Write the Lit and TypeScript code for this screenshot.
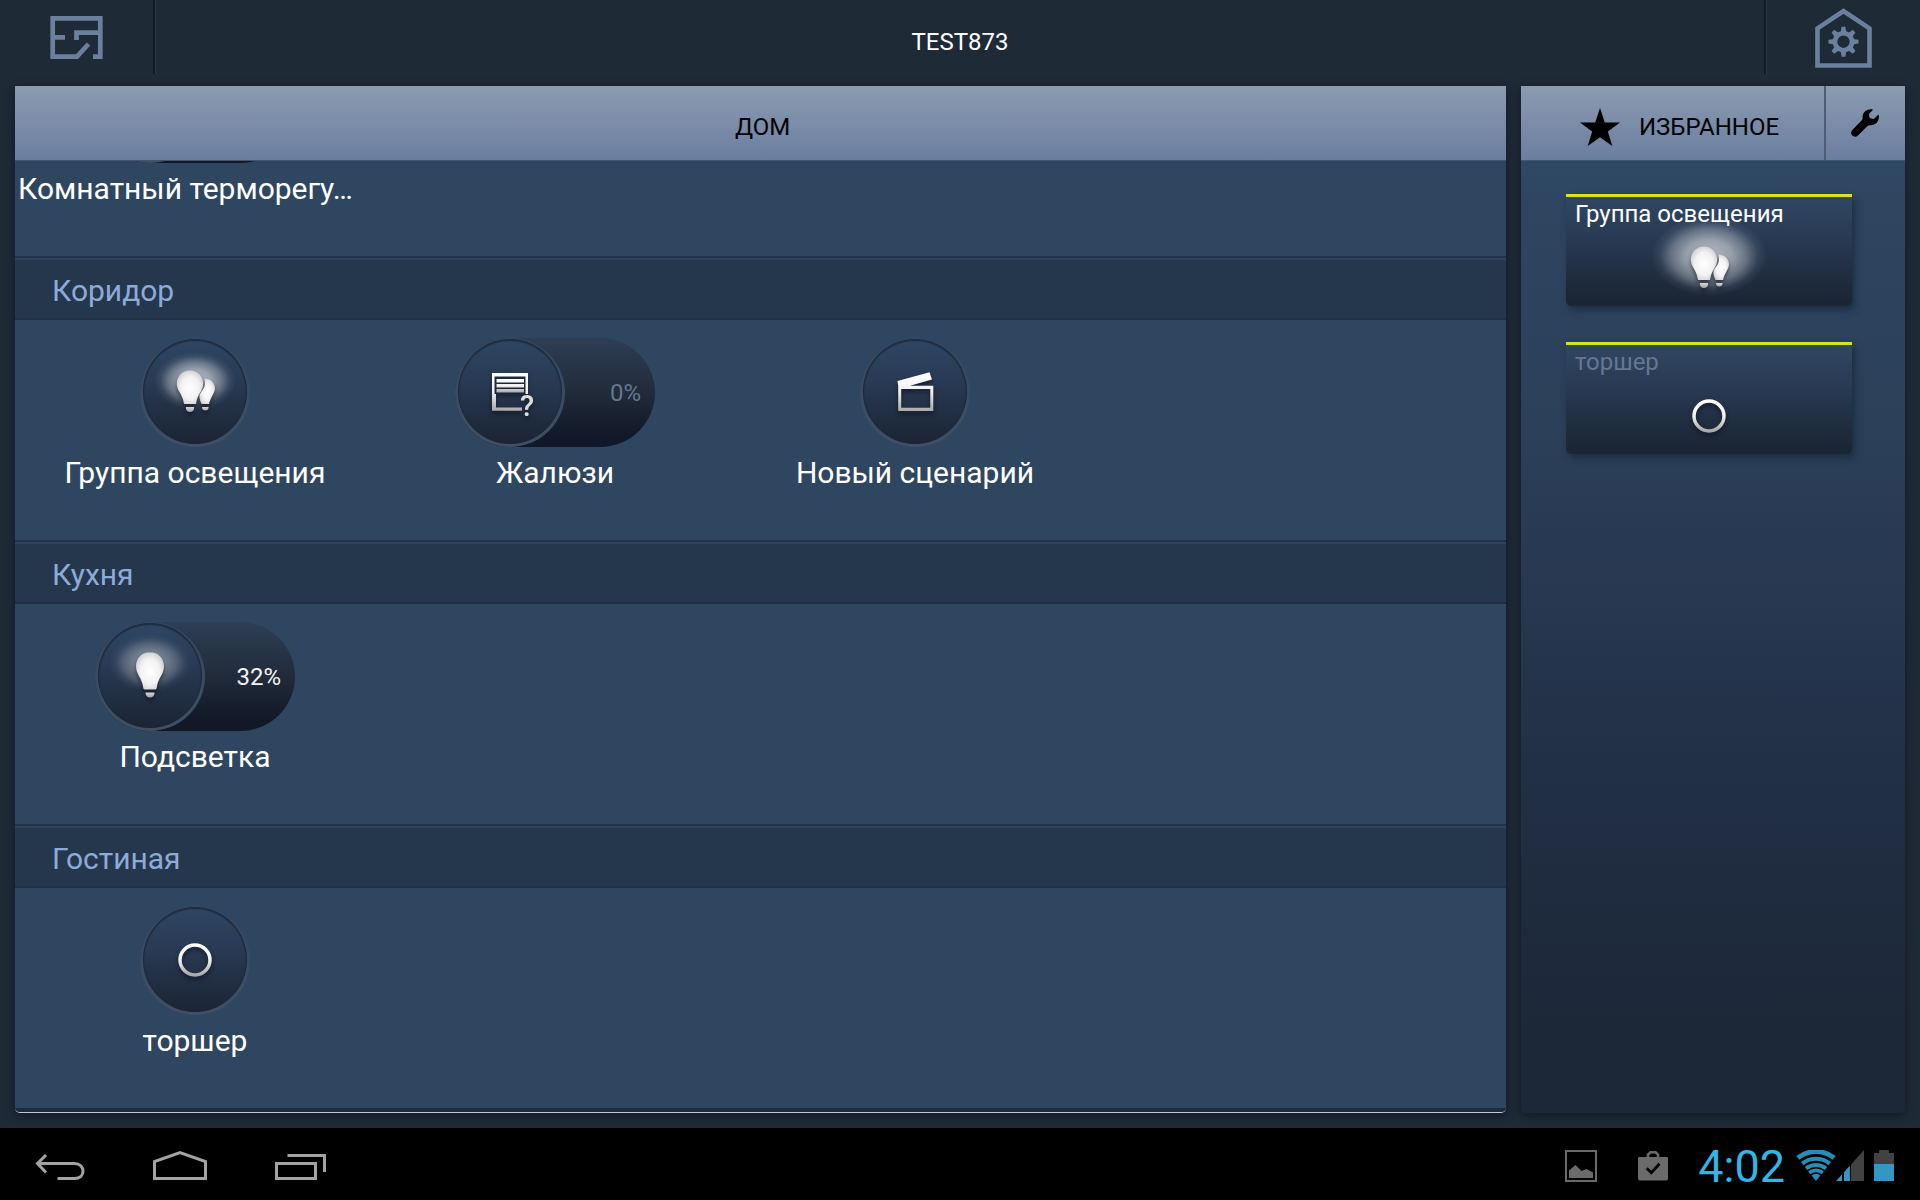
import { LitElement, html, css, svg, nothing } from "lit";
import { customElement, property, state } from "lit/decorators.js";

type IconName = "bulbs" | "bulb" | "blinds" | "scene" | "ring" | "none";

interface Device {
  name: string;
  icon: IconName;
  value?: string;
  active?: boolean;
  long?: boolean;
}

interface Room {
  name: string;
  devices: Device[];
}

const ROOMS: Room[] = [
  {
    name: "",
    devices: [{ name: "Комнатный терморегу…", icon: "none", value: "", long: true }],
  },
  {
    name: "Коридор",
    devices: [
      { name: "Группа освещения", icon: "bulbs" },
      { name: "Жалюзи", icon: "blinds", value: "0%" },
      { name: "Новый сценарий", icon: "scene" },
    ],
  },
  { name: "Кухня", devices: [{ name: "Подсветка", icon: "bulb", value: "32%", active: true }] },
  { name: "Гостиная", devices: [{ name: "торшер", icon: "ring" }] },
];

const FAVORITES: Device[] = [
  { name: "Группа освещения", icon: "bulbs", active: true },
  { name: "торшер", icon: "ring" },
];

@customElement("device-icon")
class DeviceIcon extends LitElement {
  @property() name: IconName = "ring";
  @property({ type: Boolean, reflect: true }) wide = false;

  static styles = css`
    :host {
      display: block;
      width: 110px;
      height: 109px;
    }
    :host([wide]) {
      height: 92px;
    }
    .icon {
      display: block;
      width: 100%;
      height: 100%;
      overflow: visible;
    }
    .shape {
      filter: drop-shadow(0 3px 2px rgba(8, 14, 24, 0.6));
    }
    .mark {
      font: 500 29px Roboto, "Liberation Sans", sans-serif;
    }
  `;

  private shape() {
    switch (this.name) {
      case "bulbs":
        return svg`
          <path fill="url(#lamp)" d="M50 32.5c-7.600 0-13.200 5.800-13.200 13 0 7.600 5.600 9.800 7.200 20.500h12c1.600-10.700 7.200-12.900 7.200-20.500 0-7.200-5.600-13-13.200-13z"/>
          <path fill="url(#base)" d="M45.800 69h8.400c0 3.200-1.600 5-4.200 5s-4.200-1.800-4.200-5z"/>
          <path fill="url(#lamp)" d="M64.300 40.500c6 0 10.700 4.200 10.700 9.800 0 5-4.600 8.700-5.900 15.700h-7.600c-.9-2.600-2.100-4.600-2.100-7.600 0-4.200 5.400-6.600 5.600-12.600 0-2-.3-3.600-.7-5.300z"/>
          <path fill="url(#base)" d="M62 69h6.600c0 2.400-1.300 3.600-3.300 3.600s-3.300-1.200-3.300-3.600z"/>`;
      case "bulb":
        return svg`
          <path fill="url(#lamp)" d="M55 30.300c-8.200 0-14 6.200-14 13.900 0 8.300 6.200 11.800 7.200 21.300.1 1.400.8 2 2.100 2h9.400c1.300 0 2-.6 2.100-2 1-9.500 7.200-13 7.200-21.300 0-7.700-5.800-13.900-14-13.900z"/>
          <path fill="url(#base)" d="M50.500 70.500h9c0 3.200-1.700 5-4.500 5s-4.500-1.800-4.500-5z"/>`;
      case "blinds":
        return svg`
          <path fill="url(#metal)" d="M37 35h36v21h-2.500V38.500h-31V56H41v13.500h26v3.200H37z"/>
          <path fill="url(#metal)" d="M41.500 41h27.500v3.500h-27.500zM41.500 46h27.500v3.500h-27.500zM41.500 51h27.500v3.500h-27.500z"/>
          <text class="mark" fill="#deded9" x="65" y="78">?</text>`;
      case "scene":
        return svg`
          <path fill="url(#metal)" d="M37.500 43 69.500 34.200 72 41.500 50 47.700H73.300V73H38.200V48zM41.200 51v18.800h29.100V51z" fill-rule="evenodd"/>`;
      case "ring":
        return svg`<circle cx="55" cy="54" r="15" fill="none" stroke="url(#metal)" stroke-width="3.500"/>`;
      default:
        return nothing;
    }
  }

  private glow() {
    if (this.name === "bulbs") {
      return this.wide
        ? svg`<ellipse cx="55" cy="42" rx="58" ry="40" fill="url(#glow)"/>`
        : svg`<ellipse cx="55" cy="43" rx="41" ry="29" fill="url(#glow)"/>`;
    }
    if (this.name === "bulb") {
      return svg`<ellipse cx="55" cy="41" rx="41" ry="29" fill="url(#glow)" opacity=".65"/>`;
    }
    return nothing;
  }

  render() {
    return html`
      <svg class="icon" viewBox=${this.wide ? "0 0 110 92" : "0 0 110 109"} aria-hidden="true">
        <defs>
          <radialGradient id="glow">
            <stop offset="0" stop-color="#fff" stop-opacity=".68" />
            <stop offset=".4" stop-color="#eef0f2" stop-opacity=".56" />
            <stop offset=".65" stop-color="#dfe3e8" stop-opacity=".35" />
            <stop offset=".85" stop-color="#d0d6de" stop-opacity=".09" />
            <stop offset="1" stop-color="#d0d6de" stop-opacity="0" />
          </radialGradient>
          <radialGradient id="lamp" cx=".5" cy=".52" r=".62">
            <stop offset="0" stop-color="#fff" />
            <stop offset=".55" stop-color="#f2f2f2" />
            <stop offset="1" stop-color="#c4c4c4" />
          </radialGradient>
          <linearGradient id="base" x2="0" y2="1">
            <stop offset="0" stop-color="#d8d8d8" />
            <stop offset="1" stop-color="#a2a2a2" />
          </linearGradient>
          <linearGradient id="metal" x2="0" y2="1">
            <stop offset="0" stop-color="#fff" />
            <stop offset=".5" stop-color="#f0f0ee" />
            <stop offset="1" stop-color="#a9a9a9" />
          </linearGradient>
        </defs>
        ${this.glow()}
        <g class="shape">${this.shape()}</g>
      </svg>
    `;
  }
}

@customElement("device-tile")
class DeviceTile extends LitElement {
  @property({ attribute: false }) device!: Device;

  static styles = css`
    :host {
      display: block;
    }
    .tile {
      display: flex;
      flex-direction: column;
      align-items: center;
      gap: 8px;
      width: 100%;
      padding: 0 3px;
      border: 0;
      background: none;
      font: 30px/36px Roboto, "Liberation Sans", sans-serif;
      color: #fff;
      cursor: pointer;
    }
    .pill {
      display: flex;
      align-items: center;
      justify-content: space-between;
      box-sizing: border-box;
      width: 200px;
      padding-right: 14px;
      border-radius: 55px;
      background: linear-gradient(#2e3e55, #212b3a 50%, #111827 90%);
    }
    .knob {
      display: grid;
      width: 110px;
      height: 109px;
      border-radius: 50%;
      background: linear-gradient(#32465f, #384b62 50%, #3f5065);
    }
    .face {
      grid-area: 1 / 1;
      margin: 1px 3px 3px;
      border-radius: 50%;
      background: linear-gradient(#2d4762, #293a54 40%, #1c2636 94%);
      box-shadow: inset 0 1px 1px 1px rgba(24, 34, 48, 0.7);
    }
    .icon {
      grid-area: 1 / 1;
    }
    .value {
      font-size: 24px;
      color: #647892;
    }
    .value.active {
      color: #f2f4f6;
    }
    .label {
      white-space: nowrap;
    }
    .label.long {
      align-self: flex-start;
    }
  `;

  render() {
    const d = this.device;
    const knob = html`<span class="knob"
      ><span class="face"></span><device-icon class="icon" name=${d.icon}></device-icon
    ></span>`;
    return html`
      <button class="tile" type="button">
        ${d.value === undefined
          ? knob
          : html`<span class="pill"
              >${knob}<span class="value ${d.active ? "active" : ""}">${d.value}</span></span
            >`}
        <span class="label ${d.long ? "long" : ""}">${d.name}</span>
      </button>
    `;
  }
}

@customElement("favorite-card")
class FavoriteCard extends LitElement {
  @property({ attribute: false }) device!: Device;

  static styles = css`
    :host {
      display: block;
    }
    .card {
      display: grid;
      box-sizing: border-box;
      width: 100%;
      height: 112px;
      padding: 0;
      border: 0;
      border-top: 3px solid #d9e416;
      border-radius: 0 0 5px 5px;
      background: linear-gradient(#304761, #293b55 35%, #1b2534 95%);
      box-shadow: 3px 4px 7px rgba(20, 38, 54, 0.7);
      font: 24px/28px Roboto, "Liberation Sans", sans-serif;
      color: #657891;
      text-align: left;
      cursor: pointer;
    }
    .card.active {
      color: #fff;
    }
    .label {
      grid-area: 1 / 1;
      z-index: 1;
      padding: 3px 9px;
    }
    .icon {
      grid-area: 1 / 1;
      place-self: end center;
    }
  `;

  render() {
    const d = this.device;
    return html`
      <button class="card ${d.active ? "active" : ""}" type="button">
        <span class="label">${d.name}</span>
        <device-icon class="icon" name=${d.icon} wide></device-icon>
      </button>
    `;
  }
}

@customElement("app-root")
class AppRoot extends LitElement {
  @state() private rooms = ROOMS;
  @state() private favorites = FAVORITES;

  static styles = css`
    :host {
      display: flex;
      flex-direction: column;
      height: 100vh;
      overflow: hidden;
      background: #1f2a37;
      font: 24px/28px Roboto, "Liberation Sans", sans-serif;
      color: #fff;
    }
    button {
      margin: 0;
      padding: 0;
      border: 0;
      background: none;
      font: inherit;
      color: inherit;
      cursor: pointer;
    }
    svg {
      display: block;
    }
    .top {
      display: grid;
      grid-template-columns: 156px 1fr 156px;
      align-items: start;
      height: 86px;
    }
    .corner {
      display: grid;
      place-items: center;
      box-sizing: border-box;
      height: 74px;
      padding-top: 2px;
    }
    .corner.start {
      padding-right: 3px;
      border-right: 1px solid #2b3949;
      box-shadow: inset -2px 0 #111922;
    }
    .corner.end {
      border-left: 2px solid #111922;
      box-shadow: inset 1px 0 #2b3949;
    }
    .title {
      margin: 0;
      font-size: 24px;
      font-weight: 400;
      line-height: 84px;
      text-align: center;
    }
    .main {
      display: grid;
      grid-template-columns: minmax(0, 1fr) 384px;
      gap: 15px;
      flex: 1;
      min-height: 0;
      padding: 0 15px 15px;
    }
    .panel {
      display: flex;
      flex-direction: column;
      box-sizing: border-box;
      min-height: 0;
      overflow: hidden;
      border-radius: 0 0 5px 5px;
    }
    .frame {
      display: grid;
      min-height: 0;
      border-radius: 0 0 5px 5px;
      box-shadow: 0 2px 8px rgba(8, 14, 22, 0.6);
    }
    .bar {
      display: flex;
      flex: none;
      height: 74px;
      border-bottom: 1px solid #41556f;
      background: linear-gradient(#8c9bb1, #6a7e9f);
      color: #020305;
    }
    .heading {
      display: flex;
      align-items: center;
      justify-content: center;
      gap: 19px;
      flex: 1;
      margin: 0;
      padding: 8px 0 0 4px;
      font-size: 24px;
      font-weight: 400;
    }
    .favorites .heading {
      padding-left: 14px;
    }
    .edit {
      display: grid;
      place-items: center;
      box-sizing: border-box;
      width: 81px;
      padding-right: 2px;
      border-left: 2px solid #4d5d75;
    }
    .home {
      background: #2f4660;
      border-bottom: 1px solid #c3c9d0;
    }
    .rooms {
      display: flex;
      flex-direction: column;
      justify-content: flex-end;
      flex: 1;
      min-height: 0;
      overflow: hidden;
      border-bottom: 4px solid #1e2b3d;
    }
    .room {
      flex: none;
    }
    .name {
      box-sizing: border-box;
      height: 64px;
      margin: 0;
      padding: 6px 37px 0;
      border-top: 2px solid #22324a;
      border-bottom: 2px solid #1f2e42;
      background: #25374d;
      box-shadow: inset 0 2px #2f435d;
      font-size: 30px;
      font-weight: 400;
      line-height: 54px;
      color: #8dabd8;
    }
    .devices {
      display: grid;
      grid-template-columns: repeat(auto-fill, 360px);
      align-items: start;
      box-sizing: border-box;
      height: 220px;
      padding-top: 18px;
    }
    .favorites {
      background: linear-gradient(#2f4963 74px, #2f4560 12%, #2b3f58 35%, #223047 65%, #1c2737 92%);
    }
    .cards {
      display: flex;
      flex-direction: column;
      gap: 36px;
      padding: 33px 53px 0 45px;
    }
    .system {
      display: flex;
      align-items: center;
      flex: none;
      height: 72px;
      padding: 0 26px 0 35px;
      background: #000;
    }
    .nav {
      display: flex;
      align-items: center;
      gap: 68px;
      flex: 1;
      padding-top: 1px;
    }
    .status {
      display: flex;
      align-items: center;
      padding-top: 4px;
    }
    .note {
      margin-right: 41px;
    }
    .note.last {
      margin-right: 30px;
    }
    .clock {
      margin-right: 11px;
      padding-top: 2px;
      font-size: 45px;
      line-height: 54px;
      color: #33b5e5;
    }
    .signal {
      margin-right: 10px;
    }
  `;

  private gear() {
    return [0, 45, 90, 135, 180, 225, 270, 315].map(
      (a) => svg`<path d="M25.700 24.500 26.600 18.700h3.800l.9 5.800z" transform="rotate(${a} 28.500 33.700)"/>`,
    );
  }

  render() {
    return html`
      <header class="top">
        <button class="corner start" type="button" aria-label="План">
          <svg width="53" height="44" viewBox="0 0 53 44" fill="none" stroke="#6b809d" stroke-width="4.700">
            <path d="M43 40.700h7.300V2.400H2.700v38.300h24.300L38.500 28" />
            <path d="M2.700 21.400H15M50 16.700H26.500V24" />
          </svg>
        </button>
        <h1 class="title">TEST873</h1>
        <button class="corner end" type="button" aria-label="Настройки">
          <svg width="57" height="60" viewBox="0 0 57 60" fill="#6b809d">
            <path d="M2.500 57.500V20.400L28.500 3l26 17.400v37.100z" fill="none" stroke="#6b809d" stroke-width="4.600" />
            <circle cx="28.500" cy="33.700" r="8.500" fill="none" stroke="#6b809d" stroke-width="4.600" />
            ${this.gear()}
          </svg>
        </button>
      </header>

      <main class="main">
        <div class="frame">
          <section class="panel home">
            <div class="bar"><h2 class="heading">ДОМ</h2></div>
            <div class="rooms">
              ${this.rooms.map(
                (room) => html`
                  <section class="room">
                    ${room.name ? html`<h3 class="name">${room.name}</h3>` : nothing}
                    <div class="devices">
                      ${room.devices.map((d) => html`<device-tile .device=${d}></device-tile>`)}
                    </div>
                  </section>
                `,
              )}
            </div>
          </section>
        </div>

        <div class="frame">
          <aside class="panel favorites">
            <div class="bar">
              <h2 class="heading">
                <svg width="40" height="38" viewBox="0 0 40 38" aria-hidden="true">
                  <path d="M20 0l4.800 14.400L40 14.500 27.800 23.600l4.500 14.400L20 29.300 7.700 38l4.500-14.400L0 14.500l15.200-.1z" />
                </svg>
                ИЗБРАННОЕ
              </h2>
              <button class="edit" type="button" aria-label="Изменить">
                <svg width="28" height="28" viewBox="0 0 28 28">
                  <path
                    d="M22 .700C17.500-.9 11.300 2.500 11.600 8.600c.1 1.500-.1 2.100-1 3L1.300 20.900c-3.700 4 1.700 9.200 5.600 5.600l9.400-9.300c.9-.9 1.600-1 3-1 6.200.2 9.800-5.400 8.200-10.600l-4.700 4.500-4-.9-1-4.100z"
                  />
                </svg>
              </button>
            </div>
            <div class="cards">
              ${this.favorites.map((d) => html`<favorite-card .device=${d}></favorite-card>`)}
            </div>
          </aside>
        </div>
      </main>

      <footer class="system">
        <nav class="nav">
          <button type="button" aria-label="Назад">
            <svg width="50" height="30" viewBox="0 0 50 30" fill="none" stroke="#a3a3a3" stroke-width="3">
              <path d="M2 13.500h37.500c5.500 0 8.500 3.600 8.500 7.600s-3 7.400-8.500 7.400H22.500" />
              <path d="M11 5 2.500 13.500 11 22.500" />
            </svg>
          </button>
          <button type="button" aria-label="Домой">
            <svg width="54" height="30" viewBox="0 0 54 30" fill="none" stroke="#a3a3a3" stroke-width="3">
              <path d="M1.500 28.500V11.500L27 2.600l25.500 8.900v17z" />
            </svg>
          </button>
          <button type="button" aria-label="Недавние">
            <svg width="51" height="30" viewBox="0 0 51 30" fill="none" stroke="#a3a3a3" stroke-width="3">
              <path d="M1.500 13.500h39v15h-39zM12.500 5.500h37V22" />
            </svg>
          </button>
        </nav>
        <div class="status">
          <svg class="note" width="32" height="32" viewBox="0 0 32 32" fill="#6b6b6b">
            <path d="M1 1h30v30H1z" fill="none" stroke="#6b6b6b" stroke-width="2" />
            <path d="M4 28v-7.500l6.500-5.500 6 6 5-2 6.500 3.500V28z" />
          </svg>
          <svg class="note last" width="30" height="30" viewBox="0 0 30 30">
            <path d="M10 7V3.500L12.500 1.300h5L20 3.500V7" fill="none" stroke="#6b6b6b" stroke-width="2.600" />
            <path d="M1 6h28a1 1 0 0 1 1 1v20.500a2 2 0 0 1-2 2H2a2 2 0 0 1-2-2V7a1 1 0 0 1 1-1z" fill="#6b6b6b" />
            <path d="M8.700 17.300l4.600 4.500 8.200-9" fill="none" stroke="#000" stroke-width="2.800" />
          </svg>
          <time class="clock">4:02</time>
          <svg width="40" height="32" viewBox="0 0 40 32" fill="none" stroke="#298cb4">
            <path d="M20 31 15.500 25.500a7 7 0 0 1 9 0z" fill="#298cb4" stroke="none" />
            <path d="M13.200 22.800a11 11 0 0 1 13.600 0" stroke-width="3.800" />
            <path d="M10 18.400a16.500 16.500 0 0 1 20 0" stroke-width="3.800" />
            <path d="M6.200 13.600a22.500 22.500 0 0 1 27.600 0" stroke-width="4" />
            <path d="M1.800 7.900a29.500 29.500 0 0 1 36.400 0" stroke-width="5" />
          </svg>
          <svg class="signal" width="28" height="32" viewBox="0 0 28 32">
            <path d="M28 0v31H15V14.500z" fill="#424242" />
            <path d="M0 31l6-6.500V31zM8 31V22.200l5-5.600V31z" fill="#3397c1" />
            <path d="M13 31V16.800l1-1V31z" fill="#298cb4" />
          </svg>
          <svg width="20" height="32" viewBox="0 0 20 32">
            <path d="M0 3h5V0h10v3h5v12H0z" fill="#424242" />
            <path d="M0 14h20v17H0z" fill="#3397c1" />
          </svg>
        </div>
      </footer>
    `;
  }
}
